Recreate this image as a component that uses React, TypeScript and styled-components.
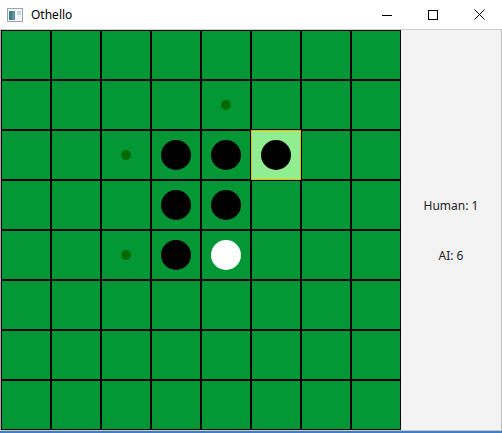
import styled, { createGlobalStyle } from 'styled-components'

const GlobalStyle = createGlobalStyle`
  html, body {
    margin: 0;
    padding: 0;
    background: #ffffff;
  }
  * {
    box-sizing: border-box;
  }
`

const Window = styled.div`
  width: 502px;
  height: 433px;
  display: flex;
  flex-direction: column;
  background: #ffffff;
  font-family: 'Noto Sans', 'Open Sans', sans-serif;
  overflow: hidden;
`

const TitleBar = styled.div`
  height: 30px;
  display: flex;
  align-items: center;
  border-bottom: 1px solid #cccccc;
  background: #ffffff;
`

const AppIcon = styled.svg`
  margin-left: 7px;
  margin-right: 8px;
`

const Title = styled.span`
  flex: 1;
  font-size: 12px;
  color: #000000;
`

const Controls = styled.div`
  display: flex;
  height: 100%;
`

const ControlButton = styled.div`
  width: 46px;
  height: 29px;
  display: flex;
  align-items: center;
  justify-content: center;
`

const Body = styled.div`
  display: flex;
  height: 400px;
  border-left: 1px solid #aaaaaa;
  border-right: 1px solid #bbbbbb;
`

const Board = styled.div`
  display: grid;
  grid-template-columns: repeat(8, 50px);
  grid-template-rows: repeat(8, 50px);
  width: 400px;
`

const Cell = styled.div<{ $highlight?: boolean }>`
  display: flex;
  align-items: center;
  justify-content: center;
  background: ${(p) => (p.$highlight ? '#90ee90' : '#039735')};
  border: 1px solid ${(p) => (p.$highlight ? '#e0c000' : '#000000')};
`

const Piece = styled.div<{ $color: 'black' | 'white' }>`
  width: 30px;
  height: 30px;
  border-radius: 50%;
  background: ${(p) => (p.$color === 'black' ? '#000000' : '#ffffff')};
`

const Hint = styled.div`
  width: 10px;
  height: 10px;
  border-radius: 50%;
  background: #006b00;
`

const Side = styled.div`
  flex: 1;
  background: #f3f3f3;
  display: flex;
  flex-direction: column;
  align-items: center;
  justify-content: center;
  gap: 34px;
  padding-top: 2px;
`

const Score = styled.div`
  font-size: 12px;
  line-height: 16px;
  color: #222222;
`

const BottomEdge = styled.div`
  height: 1px;
  background: #c8c8c8;
`

const Taskbar = styled.div`
  height: 2px;
  background: #3c7fc4;
`

// b = black, w = white, . = hint, h = highlighted black
const layout = [
  '        ',
  '    .   ',
  '  .bbh  ',
  '   bb   ',
  '  .bw   ',
  '        ',
  '        ',
  '        ',
]

export default function App() {
  return (
    <>
      <GlobalStyle />
      <Window>
        <TitleBar>
          <AppIcon width="16" height="14" viewBox="0 0 16 14">
            <rect x="0.5" y="0.5" width="15" height="13" fill="#f4f6f8" stroke="#9aa4ae" />
            <rect x="2" y="3" width="6" height="9" fill="#5f8fa8" />
            <rect x="2" y="3" width="3" height="9" fill="#3d7f82" />
            <rect x="10" y="3" width="4" height="4" fill="#c9d3da" />
          </AppIcon>
          <Title>Othello</Title>
          <Controls>
            <ControlButton>
              <svg width="10" height="10" viewBox="0 0 10 10">
                <line x1="0" y1="5.5" x2="10" y2="5.5" stroke="#000" strokeWidth="1" />
              </svg>
            </ControlButton>
            <ControlButton>
              <svg width="10" height="10" viewBox="0 0 10 10">
                <rect x="0.5" y="0.5" width="9" height="9" fill="none" stroke="#000" strokeWidth="1" />
              </svg>
            </ControlButton>
            <ControlButton>
              <svg width="11" height="11" viewBox="0 0 11 11">
                <path d="M0.5 0.5 L10.5 10.5 M10.5 0.5 L0.5 10.5" stroke="#000" strokeWidth="1" />
              </svg>
            </ControlButton>
          </Controls>
        </TitleBar>
        <Body>
          <Board>
            {layout.map((row, r) =>
              row.split('').map((c, col) => (
                <Cell key={`${r}-${col}`} $highlight={c === 'h'}>
                  {(c === 'b' || c === 'h') && <Piece $color="black" />}
                  {c === 'w' && <Piece $color="white" />}
                  {c === '.' && <Hint />}
                </Cell>
              ))
            )}
          </Board>
          <Side>
            <Score>Human: 1</Score>
            <Score>AI: 6</Score>
          </Side>
        </Body>
        <BottomEdge />
        <Taskbar />
      </Window>
    </>
  )
}
